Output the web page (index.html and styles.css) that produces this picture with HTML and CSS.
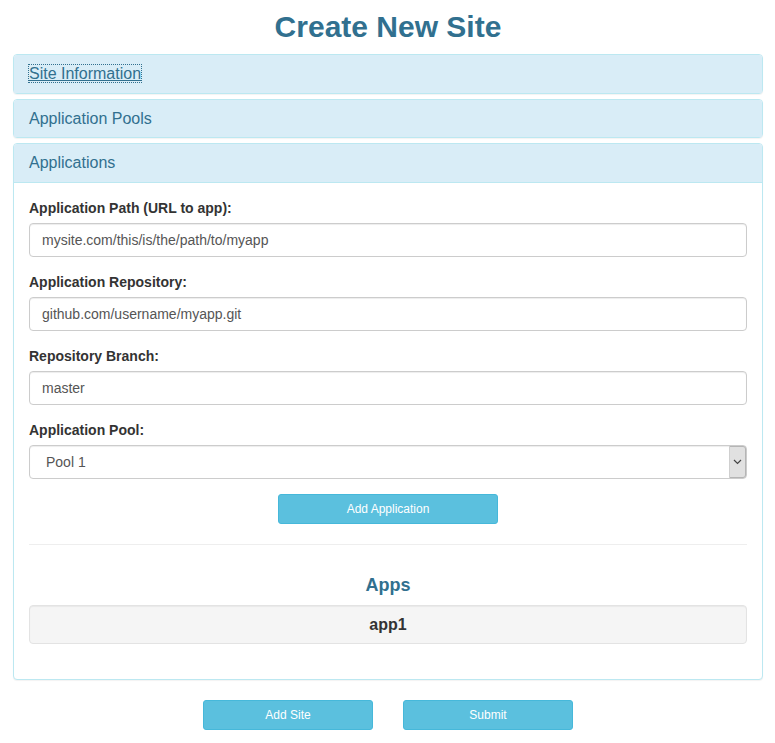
FILE: index.html
```html
<!DOCTYPE html>
<html lang="en">
<head>
<meta charset="utf-8">
<title>Create New Site</title>
<link rel="stylesheet" href="styles.css">
</head>
<body>
<div class="page">
  <h1 class="title">Create New Site</h1>
  <div class="panel-group">
    <div class="panel">
      <div class="panel-heading"><h4 class="panel-title"><a class="focused" href="#">Site Information</a></h4></div>
    </div>
    <div class="panel">
      <div class="panel-heading"><h4 class="panel-title">Application Pools</h4></div>
    </div>
    <div class="panel">
      <div class="panel-heading"><h4 class="panel-title">Applications</h4></div>
      <div class="panel-body">
        <div class="form-group">
          <label class="label">Application Path (URL to app):</label>
          <input class="form-control" type="text" value="mysite.com/this/is/the/path/to/myapp">
        </div>
        <div class="form-group">
          <label class="label">Application Repository:</label>
          <input class="form-control" type="text" value="github.com/username/myapp.git">
        </div>
        <div class="form-group">
          <label class="label">Repository Branch:</label>
          <input class="form-control" type="text" value="master">
        </div>
        <div class="form-group">
          <label class="label">Application Pool:</label>
          <div class="select-wrap">
            <select class="form-control select"><option>Pool 1</option></select>
            <span class="select-arrow"><svg width="9" height="6" viewBox="0 0 9 6"><path d="M1 1 L4.5 4.5 L8 1" fill="none" stroke="#444" stroke-width="1.2"/></svg></span>
          </div>
        </div>
        <div class="center">
          <button class="btn btn-wide" type="button">Add Application</button>
        </div>
        <hr class="divider">
        <div class="apps">
          <h4 class="apps-title">Apps</h4>
          <div class="well">app1</div>
        </div>
      </div>
    </div>
  </div>
  <div class="actions">
    <button class="btn btn-action" type="button">Add Site</button>
    <button class="btn btn-action" type="button">Submit</button>
  </div>
</div>
</body>
</html>
```

FILE: styles.css
```css
* { box-sizing: border-box; }
body {
  margin: 0;
  font-family: "Liberation Sans", Arial, sans-serif;
  font-size: 14px;
  line-height: 1.42857;
  color: #333;
  background: #fff;
}
.page { padding: 0 12px 0 13px; }
.title {
  text-align: center;
  font-size: 30px;
  font-weight: bold;
  line-height: 33px;
  margin: 10px 0 11px;
  color: #31708f;
}
.panel-group { margin-bottom: 20px; }
.panel {
  border: 1px solid #bce8f1;
  border-radius: 4px;
  background: #fff;
  box-shadow: 0 1px 1px rgba(0,0,0,.05);
}
.panel + .panel { margin-top: 5px; }
.panel-heading {
  background: #d9edf7;
  color: #31708f;
  padding: 10px 15px;
  border-radius: 3px 3px 0 0;
}
.panel-title {
  margin: 0;
  font-size: 16px;
  font-weight: normal;
  line-height: 17.6px;
}
.panel-title a { color: #31708f; text-decoration: underline; }
.focused { outline: 1px dotted #31708f; }
.panel-body {
  border-top: 1px solid #bce8f1;
  padding: 15px;
}
.form-group { margin-bottom: 15px; }
.label {
  display: block;
  font-weight: bold;
  margin-bottom: 5px;
  line-height: 20px;
}
.form-control {
  display: block;
  width: 100%;
  height: 34px;
  padding: 6px 12px;
  font-family: inherit;
  font-size: 14px;
  line-height: 20px;
  color: #555;
  background: #fff;
  border: 1px solid #ccc;
  border-radius: 4px;
  box-shadow: inset 0 1px 1px rgba(0,0,0,.075);
}
.select-wrap { position: relative; }
.select {
  -webkit-appearance: none;
  appearance: none;
  padding-left: 16px;
}
.select-arrow {
  position: absolute;
  top: 1px;
  right: 1px;
  bottom: 1px;
  width: 17px;
  background: #e1e1e1;
  border: 1px solid #b5b5b5;
  border-left-color: #cfcfcf;
  border-radius: 0 3px 3px 0;
  display: flex;
  align-items: center;
  justify-content: center;
  pointer-events: none;
}
.center { text-align: center; }
.btn {
  display: inline-block;
  height: 30px;
  padding: 5px 10px;
  font-family: inherit;
  font-size: 12px;
  line-height: 18px;
  color: #fff;
  background: #5bc0de;
  border: 1px solid #46b8da;
  border-radius: 3px;
}
.btn-wide { width: 220px; }
.divider {
  margin: 20px 0 0;
  border: 0;
  border-top: 1px solid #eee;
}
.apps { padding-top: 30px; }
.apps-title {
  margin: 0 0 10px;
  text-align: center;
  font-size: 18px;
  font-weight: bold;
  line-height: 20px;
  color: #31708f;
}
.well {
  background: #f5f5f5;
  border: 1px solid #e3e3e3;
  border-radius: 4px;
  box-shadow: inset 0 1px 1px rgba(0,0,0,.05);
  padding: 9px;
  text-align: center;
  font-size: 16px;
  font-weight: bold;
  line-height: 19px;
  color: #333;
  margin-bottom: 20px;
}
.actions {
  display: flex;
  justify-content: center;
  gap: 30px;
}
.btn-action { width: 170px; }
```
